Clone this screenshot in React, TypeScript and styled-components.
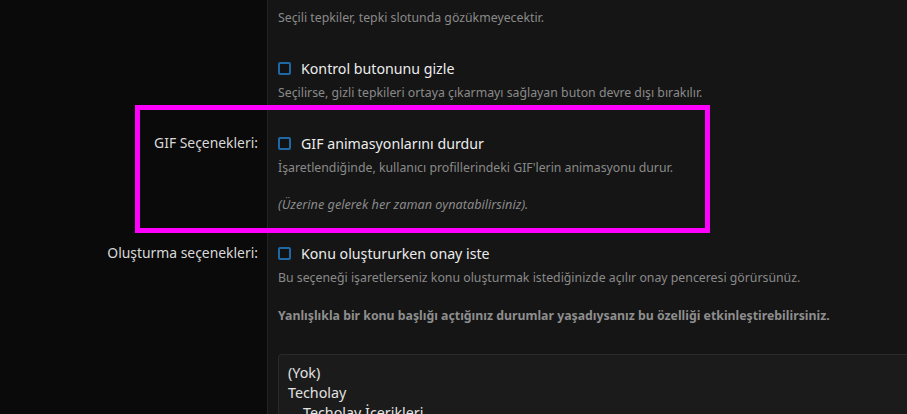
import React from "react";
import styled, { createGlobalStyle } from "styled-components";

const Global = createGlobalStyle`
  html, body { margin: 0; padding: 0; background: #0a0a0a; }
  body { font-family: "Noto Sans", "Open Sans", sans-serif; overflow: hidden; }
`;

const Page = styled.div`
  position: relative;
  width: 907px;
  height: 414px;
  overflow: hidden;
  display: grid;
  grid-template-columns: 267px 1fr;
  background: #0a0a0a;
`;

const LabelCell = styled.div<{ $pt: number }>`
  padding: ${(p) => p.$pt}px 9px 0 0;
  text-align: right;
  font-size: 13.9px;
  line-height: 20px;
  color: #d9d9d9;
`;

const ContentCell = styled.div<{ $pt: number }>`
  background: #151515;
  border-left: 1px solid #242424;
  padding: ${(p) => p.$pt}px 0 0 10px;
  min-width: 0;
`;

const CheckRow = styled.label`
  display: flex;
  align-items: center;
  gap: 10px;
  height: 20px;
  font-size: 14.2px;
  color: #ececec;
`;

const Box = styled.span`
  width: 13px;
  height: 13px;
  box-sizing: border-box;
  border: 2px solid #1f68a6;
  border-radius: 2px;
  background: #121212;
  flex: none;
`;

const Desc = styled.p<{ $mt?: number; $italic?: boolean; $bold?: boolean }>`
  margin: ${(p) => p.$mt ?? 6}px 0 0;
  font-size: ${(p) => (p.$italic ? 12.7 : 12.3)}px;
  line-height: 18px;
  color: ${(p) => (p.$bold ? "#8e8e8e" : "#8a8a8a")};
  font-style: ${(p) => (p.$italic ? "italic" : "normal")};
  font-weight: ${(p) => (p.$bold ? 700 : 400)};
  white-space: nowrap;
`;

const ListBox = styled.div`
  margin-top: 29px;
  background: #1b1b1b;
  border: 1px solid #2a2a2a;
  border-right: none;
  border-radius: 4px 0 0 0;
  padding: 8px 0 0 9px;
  height: 80px;
`;

const ListItem = styled.div<{ $indent?: number }>`
  font-size: 14.3px;
  line-height: 20px;
  color: #e2e2e2;
  padding-left: ${(p) => p.$indent ?? 0}px;
  white-space: nowrap;
`;

const Highlight = styled.div`
  position: absolute;
  left: 135px;
  top: 105px;
  width: 575px;
  height: 128px;
  box-sizing: border-box;
  border: 5px solid #ff00ff;
  pointer-events: none;
`;

export default function App() {
  return (
    <>
      <Global />
      <Page>
        <LabelCell $pt={0} />
        <ContentCell $pt={9}>
          <Desc $mt={0}>Seçili tepkiler, tepki slotunda gözükmeyecektir.</Desc>
        </ContentCell>

        <LabelCell $pt={31} />
        <ContentCell $pt={31}>
          <CheckRow>
            <Box />
            Kontrol butonunu gizle
          </CheckRow>
          <Desc>Seçilirse, gizli tepkileri ortaya çıkarmayı sağlayan buton devre dışı bırakılır.</Desc>
        </ContentCell>

        <LabelCell $pt={31}>GIF Seçenekleri:</LabelCell>
        <ContentCell $pt={31}>
          <CheckRow>
            <Box />
            GIF animasyonlarını durdur
          </CheckRow>
          <Desc>İşaretlendiğinde, kullanıcı profillerindeki GIF'lerin animasyonu durur.</Desc>
          <Desc $mt={18} $italic>(Üzerine gelerek her zaman oynatabilirsiniz).</Desc>
        </ContentCell>

        <LabelCell $pt={30}>Oluşturma seçenekleri:</LabelCell>
        <ContentCell $pt={30}>
          <CheckRow>
            <Box />
            Konu oluştururken onay iste
          </CheckRow>
          <Desc>Bu seçeneği işaretlerseniz konu oluşturmak istediğinizde açılır onay penceresi görürsünüz.</Desc>
          <Desc $mt={20} $bold>Yanlışlıkla bir konu başlığı açtığınız durumlar yaşadıysanız bu özelliği etkinleştirebilirsiniz.</Desc>
          <ListBox>
            <ListItem>(Yok)</ListItem>
            <ListItem>Techolay</ListItem>
            <ListItem $indent={15}>Techolay İçerikleri</ListItem>
          </ListBox>
        </ContentCell>
        <Highlight />
      </Page>
    </>
  );
}
